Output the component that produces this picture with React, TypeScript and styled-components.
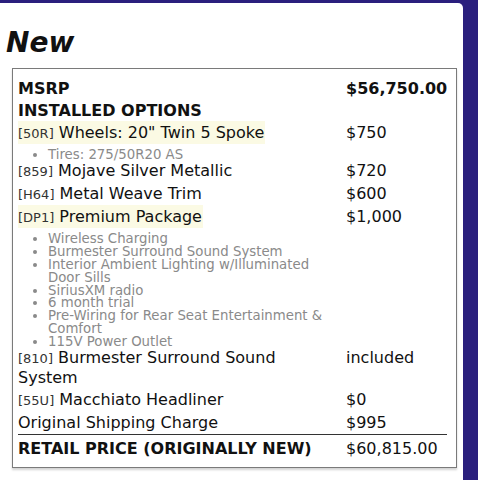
import React from "react";
import styled, { createGlobalStyle } from "styled-components";

const Global = createGlobalStyle`
  html, body { margin: 0; padding: 0; }
  body {
    background: #2a1f7d;
    font-family: "DejaVu Sans", Verdana, sans-serif;
    color: #111;
    overflow: hidden;
  }
`;

const Card = styled.div`
  background: #ffffff;
  width: 463px;
  min-height: 477px;
  margin-top: 3px;
  border-radius: 0 5px 0 0;
  padding: 0 0 0 6px;
  box-sizing: border-box;
  overflow: hidden;
`;

const Title = styled.h2`
  margin: 23px 0 0 0;
  font-size: 28px;
  font-weight: bold;
  font-style: italic;
  line-height: 33px;
  color: #111;
`;

const Box = styled.div`
  margin: 9px 0 0 6px;
  width: 445px;
  box-sizing: border-box;
  border: 1px solid #7a7a7a;
  box-shadow: 0 2px 2px rgba(0, 0, 0, 0.18);
  padding: 9px 9px 8px 5px;
  display: grid;
  grid-template-columns: 322px 1fr;
  column-gap: 6px;
  row-gap: 1px;
  align-items: start;
`;

const Cell = styled.div<{ $bold?: boolean }>`
  font-size: 16px;
  line-height: 19px;
  padding: 1px 0;
  font-weight: ${(p) => (p.$bold ? "bold" : "normal")};
  color: #111;
`;

const Name = styled.span<{ $hl?: boolean }>`
  background: ${(p) => (p.$hl ? "#fbfae4" : "transparent")};
  padding: 2px 1px 2px 0;
`;

const Code = styled.span`
  font-size: 13px;
  color: #333;
`;

const SubList = styled.ul`
  margin: 6px 0 -4px 0;
  padding: 0 0 0 30px;
  font-size: 13.3px;
  line-height: 12.9px;
  color: #8a8a8a;
`;

const SubItem = styled.li`
  margin: 0;
`;

const Divider = styled.div`
  grid-column: 1 / -1;
  height: 1px;
  background: #333;
  margin: 0 0 2px 0;
`;

type Opt = { code?: string; name: string; price: string; hl?: boolean; subs?: string[] };

const options: Opt[] = [
  { code: "[50R]", name: 'Wheels: 20" Twin 5 Spoke', price: "$750", hl: true, subs: ["Tires: 275/50R20 AS"] },
  { code: "[859]", name: "Mojave Silver Metallic", price: "$720" },
  { code: "[H64]", name: "Metal Weave Trim", price: "$600" },
  {
    code: "[DP1]",
    name: "Premium Package",
    price: "$1,000",
    hl: true,
    subs: [
      "Wireless Charging",
      "Burmester Surround Sound System",
      "Interior Ambient Lighting w/Illuminated Door Sills",
      "SiriusXM radio",
      "6 month trial",
      "Pre-Wiring for Rear Seat Entertainment & Comfort",
      "115V Power Outlet",
    ],
  },
  { code: "[810]", name: "Burmester Surround Sound System", price: "included" },
  { code: "[55U]", name: "Macchiato Headliner", price: "$0" },
  { name: "Original Shipping Charge", price: "$995" },
];

export default function App() {
  return (
    <>
      <Global />
      <Card>
        <Title>New</Title>
        <Box>
          <Cell $bold>MSRP</Cell>
          <Cell $bold>$56,750.00</Cell>
          <Cell $bold>INSTALLED OPTIONS</Cell>
          <Cell />
          {options.map((o, i) => (
            <React.Fragment key={i}>
              <Cell>
                <Name $hl={o.hl}>
                  {o.code && <Code>{o.code}</Code>}
                  {o.code ? " " : ""}
                  {o.name}
                </Name>
                {o.subs && (
                  <SubList>
                    {o.subs.map((s) => (
                      <SubItem key={s}>{s}</SubItem>
                    ))}
                  </SubList>
                )}
              </Cell>
              <Cell>{o.price}</Cell>
            </React.Fragment>
          ))}
          <Divider />
          <Cell $bold>RETAIL PRICE (ORIGINALLY NEW)</Cell>
          <Cell>$60,815.00</Cell>
        </Box>
      </Card>
    </>
  );
}
